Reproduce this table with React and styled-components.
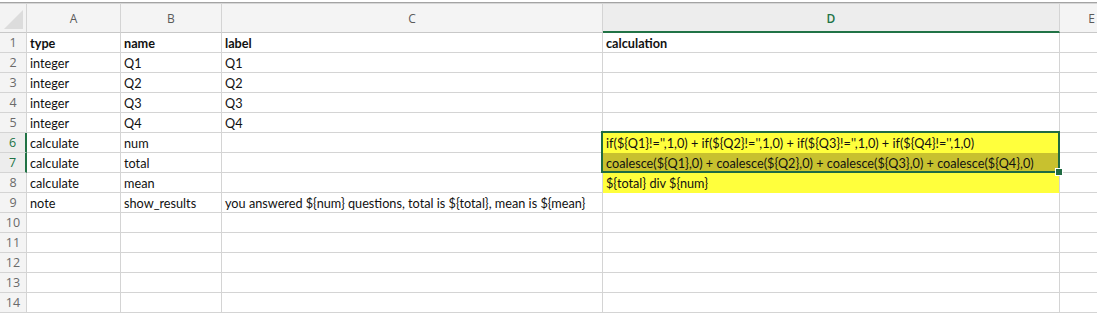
import React from 'react'
import styled, { createGlobalStyle } from 'styled-components'

const GlobalStyle = createGlobalStyle`
  html, body {
    margin: 0;
    padding: 0;
    background: #ffffff;
  }
  body {
    font-family: Lato, "Open Sans", "Liberation Sans", sans-serif;
    overflow: hidden;
  }
`

const COLUMNS = ['A', 'B', 'C', 'D', 'E']
const SELECTED_COL = 'D'
const SELECTED_ROWS = [6, 7]

const rows = [
  { type: 'type', name: 'name', label: 'label', calculation: 'calculation', bold: true },
  { type: 'integer', name: 'Q1', label: 'Q1' },
  { type: 'integer', name: 'Q2', label: 'Q2' },
  { type: 'integer', name: 'Q3', label: 'Q3' },
  { type: 'integer', name: 'Q4', label: 'Q4' },
  {
    type: 'calculate',
    name: 'num',
    calculation: "if(${Q1}!='',1,0) + if(${Q2}!='',1,0) + if(${Q3}!='',1,0) + if(${Q4}!='',1,0)",
    fill: 'yellow',
  },
  {
    type: 'calculate',
    name: 'total',
    calculation: 'coalesce(${Q1},0) + coalesce(${Q2},0) + coalesce(${Q3},0) + coalesce(${Q4},0)',
    fill: 'olive',
  },
  { type: 'calculate', name: 'mean', calculation: '${total} div ${num}', fill: 'yellow' },
  {
    type: 'note',
    name: 'show_results',
    label: 'you answered ${num} questions, total is ${total}, mean is ${mean}',
  },
  {}, {}, {}, {}, {},
]

const fills = {
  yellow: '#ffff3c',
  olive: '#c8c12f',
}

function Sheet() {
  return (
    <Wrapper>
      <FormulaEdge />
      <Grid>
        <Corner>
          <CornerTriangle />
        </Corner>
        {COLUMNS.map(col => (
          <ColHeader key={col} active={col === SELECTED_COL}>
            {col}
          </ColHeader>
        ))}
        {rows.map((row, i) => {
          const n = i + 1
          const active = SELECTED_ROWS.includes(n)
          return (
            <React.Fragment key={n}>
              <RowHeader active={active}>{n}</RowHeader>
              <Cell bold={row.bold}>{row.type}</Cell>
              <Cell bold={row.bold}>{row.name}</Cell>
              <Cell bold={row.bold}>{row.label}</Cell>
              <Cell bold={row.bold} fill={row.fill && fills[row.fill]}>
                {row.calculation}
              </Cell>
              <Cell />
            </React.Fragment>
          )
        })}
        <Selection>
          <FillHandle />
        </Selection>
      </Grid>
    </Wrapper>
  )
}

const Wrapper = styled.div`
  width: 1097px;
  height: 313px;
  overflow: hidden;
`

const FormulaEdge = styled.div`
  position: relative;
  height: 3px;
  border-bottom: 1px solid #a3a3a3;
  box-sizing: border-box;
  background: #ffffff;
`

const Grid = styled.div`
  position: relative;
  display: grid;
  grid-template-columns: 27px 94px 101px 381px 457px 64px;
  grid-template-rows: 29px repeat(14, 20px);
  border-top: 1px solid #d6d6d6;
`

const Corner = styled.div`
  position: relative;
  background: #f3f3f3;
  border-right: 1px solid #d4d4d4;
  border-bottom: 1px solid #c8c8c8;
`

const CornerTriangle = styled.div`
  position: absolute;
  right: 3px;
  bottom: 3px;
  width: 0;
  height: 0;
  border-left: 19px solid transparent;
  border-bottom: 19px solid #dcdcdc;
`

const ColHeader = styled.div`
  display: flex;
  align-items: center;
  justify-content: center;
  box-sizing: border-box;
  font-family: "Open Sans", "Liberation Sans", sans-serif;
  font-size: 12px;
  color: ${({ active }) => (active ? '#217346' : '#5a5a5a')};
  font-weight: ${({ active }) => (active ? 600 : 400)};
  background: ${({ active }) => (active ? '#ededed' : '#f4f4f4')};
  border-right: 1px solid #d4d4d4;
  border-bottom: ${({ active }) => (active ? '2px solid #217346' : '1px solid #c8c8c8')};
  padding-top: ${({ active }) => (active ? '1px' : '0')};
`

const RowHeader = styled.div`
  display: flex;
  align-items: center;
  justify-content: center;
  box-sizing: border-box;
  font-family: "Open Sans", "Liberation Sans", sans-serif;
  font-size: 12.5px;
  color: ${({ active }) => (active ? '#217346' : '#6a6a6a')};
  background: ${({ active }) => (active ? '#ededed' : '#f4f4f4')};
  border-right: ${({ active }) => (active ? '2px solid #217346' : '1px solid #d4d4d4')};
  border-bottom: 1px solid #d4d4d4;
`

const Cell = styled.div`
  box-sizing: border-box;
  display: flex;
  align-items: center;
  padding: 0 3px 0 3px;
  white-space: nowrap;
  overflow: visible;
  font-size: 12.7px;
  color: #111111;
  font-weight: ${({ bold }) => (bold ? 700 : 400)};
  background: ${({ fill }) => fill || 'transparent'};
  border-right: 1px solid #d4d4d4;
  border-bottom: 1px solid ${({ fill }) => fill || '#d4d4d4'};
`

// selection box around D6:D7
const Selection = styled.div`
  position: absolute;
  left: 601px;
  top: 127px;
  width: 459px;
  height: 42px;
  border: 2px solid #1f6b42;
  box-sizing: border-box;
  pointer-events: none;
`

const FillHandle = styled.div`
  position: absolute;
  right: -5px;
  bottom: -5px;
  width: 6px;
  height: 6px;
  background: #1f6b42;
  border: 1px solid #ffffff;
`

export default function App() {
  return (
    <>
      <GlobalStyle />
      <Sheet />
    </>
  )
}
